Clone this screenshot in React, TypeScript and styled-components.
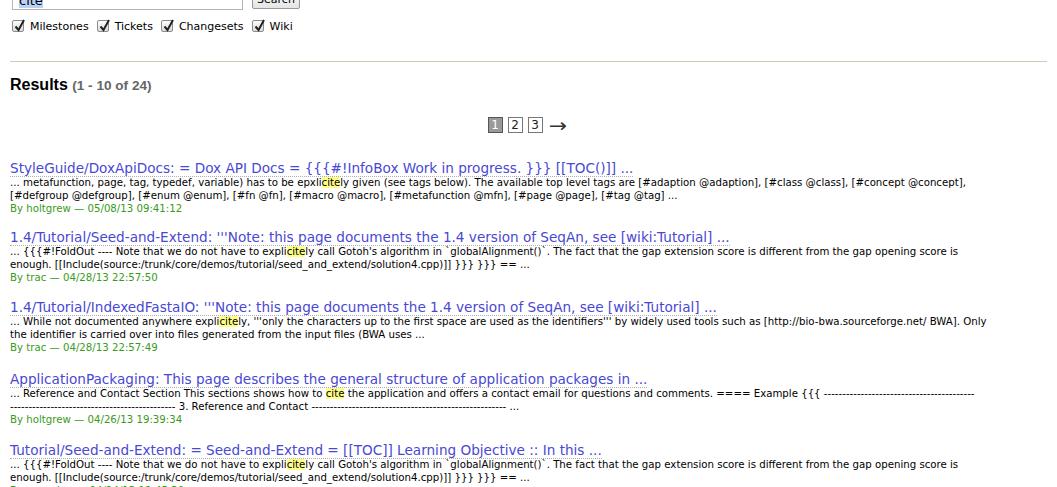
import React from "react";
import styled, { createGlobalStyle } from "styled-components";

const Global = createGlobalStyle`
  html, body { margin: 0; padding: 0; background: #fff; }
  body {
    font-family: "DejaVu Sans", Verdana, sans-serif;
    font-size: 11px;
    color: #000;
    overflow: hidden;
  }
`;

const Page = styled.div`
  padding: 0 10px;
`;

const SearchForm = styled.div`
  display: flex;
  align-items: flex-end;
  gap: 9px;
  margin-top: -12px;
  padding-left: 2px;
`;

const QueryField = styled.div`
  box-sizing: border-box;
  width: 231px;
  height: 22px;
  border: 1px solid #b5b5b5;
  border-top-color: #8a8a8a;
  background: #fff;
  display: flex;
  align-items: center;
  padding: 3px 0 0 6px;
  font-size: 13px;
`;

const Selected = styled.span`
  background: #b8d3f5;
  line-height: 15px;
`;

const SearchButton = styled.div`
  box-sizing: border-box;
  width: 48px;
  height: 20px;
  margin-bottom: 1px;
  border: 1px solid #9a9a9a;
  border-radius: 2px;
  background: linear-gradient(#ffffff, #e4e4e4);
  display: flex;
  align-items: center;
  justify-content: center;
  font-size: 11px;
`;

const Filters = styled.div`
  display: flex;
  align-items: center;
  gap: 8px;
  margin-top: 9px;
  padding-left: 2px;
  height: 14px;
`;

const Filter = styled.label`
  display: flex;
  align-items: center;
  gap: 6px;
  font-size: 11px;
`;

const Box = styled.span`
  position: relative;
  box-sizing: border-box;
  width: 12px;
  height: 12px;
  border: 1px solid #8c8c8c;
  border-radius: 2px;
  background: linear-gradient(#fdfdfd, #dcdcdc);
  display: inline-block;

  svg {
    position: absolute;
    left: 0px;
    top: -3px;
  }
`;

const Rule = styled.div`
  border-top: 1px solid #ccccbb;
  margin-top: 28px;
  height: 0;
`;

const Heading = styled.h2`
  font-family: "Liberation Sans", Arial, sans-serif;
  font-size: 16px;
  line-height: 18px;
  font-weight: bold;
  margin: 14px 0 0;
`;

const NumResults = styled.span`
  color: #666;
  font-size: 13.6px;
`;

const Paging = styled.div`
  display: flex;
  justify-content: center;
  align-items: center;
  gap: 5px;
  margin-top: 21px;
  padding-right: 4px;
  height: 17px;
`;

const PageBox = styled.span<{ $current?: boolean }>`
  box-sizing: border-box;
  width: 15px;
  height: 16px;
  border: 1px solid ${(p) => (p.$current ? "#555" : "#777")};
  background: ${(p) => (p.$current ? "#999" : "#fff")};
  color: ${(p) => (p.$current ? "#fff" : "#222")};
  display: flex;
  align-items: center;
  justify-content: center;
  font-size: 12px;
`;

const Arrow = styled.span`
  margin-left: 2px;
  font-size: 19px;
  line-height: 16px;
  color: #333;
  transform: scaleX(1.15);
`;

const Results = styled.dl`
  margin: 28px 0 0;
`;

const Item = styled.div<{ $gap: number }>`
  margin-bottom: ${(p) => p.$gap}px;
`;

const Title = styled.dt`
  font-size: 13.6px;
  line-height: 14px;
  height: 15px;
  a {
    color: #4848d4;
    text-decoration: none;
    border-bottom: 1px dotted #b0b0b0;
  }
`;

const Excerpt = styled.dd`
  margin: 0;
  font-size: 10.2px;
  line-height: 13px;
`;

const Line = styled.div`
  white-space: nowrap;
`;

const Hit = styled.span`
  background: #ffff88;
`;

const Meta = styled.dd`
  margin: 0;
  font-size: 10.2px;
  line-height: 13px;
  color: #3a9a20;
`;

const Check = () => (
  <Box>
    <svg width="13" height="14" viewBox="0 0 13 14">
      <path d="M2.5 8.5 L5.5 12 L11 2" fill="none" stroke="#222" strokeWidth="2" />
    </svg>
  </Box>
);

type Seg = string | { hit: string };
type Result = { title: string; lines: Seg[][]; author: string; date: string; gap: number };

const dashes = (n: number) => "-".repeat(n);

const fold1 = "... {{{#!FoldOut ---- Note that we do not have to expli";
const fold2 =
  "ly call Gotoh's algorithm in `globalAlignment()`. The fact that the gap extension score is different from the gap opening score is";
const foldEnd = "enough. [[Include(source:/trunk/core/demos/tutorial/seed_and_extend/solution4.cpp)]] }}} }}} == ...";

const results: Result[] = [
  {
    title: "StyleGuide/DoxApiDocs: = Dox API Docs = {{{#!InfoBox Work in progress. }}} [[TOC()]] ...",
    lines: [
      [
        "... metafunction, page, tag, typedef, variable) has to be epxli",
        { hit: "cite" },
        "ly given (see tags below). The available top level tags are [#adaption @adaption], [#class @class], [#concept @concept],",
      ],
      ["[#defgroup @defgroup], [#enum @enum], [#fn @fn], [#macro @macro], [#metafunction @mfn], [#page @page], [#tag @tag] ..."],
    ],
    author: "holtgrew",
    date: "05/08/13 09:41:12",
    gap: 15,
  },
  {
    title: "1.4/Tutorial/Seed-and-Extend: '''Note: this page documents the 1.4 version of SeqAn, see [wiki:Tutorial] ...",
    lines: [[fold1, { hit: "cite" }, fold2], [foldEnd]],
    author: "trac",
    date: "04/28/13 22:57:50",
    gap: 16,
  },
  {
    title: "1.4/Tutorial/IndexedFastaIO: '''Note: this page documents the 1.4 version of SeqAn, see [wiki:Tutorial] ...",
    lines: [
      [
        "... While not documented anywhere expli",
        { hit: "cite" },
        "ly, '''only the characters up to the first space are used as the identifiers''' by widely used tools such as [http://bio-bwa.sourceforge.net/ BWA]. Only",
      ],
      ["the identifier is carried over into files generated from the input files (BWA uses ..."],
    ],
    author: "trac",
    date: "04/28/13 22:57:49",
    gap: 18,
  },
  {
    title: "ApplicationPackaging: This page describes the general structure of application packages in ...",
    lines: [
      [
        "... Reference and Contact Section This sections shows how to ",
        { hit: "cite" },
        " the application and offers a contact email for questions and comments. ==== Example {{{ " + dashes(41),
      ],
      [dashes(45) + " 3. Reference and Contact " + dashes(53) + " ..."],
    ],
    author: "holtgrew",
    date: "04/26/13 19:39:34",
    gap: 17,
  },
  {
    title: "Tutorial/Seed-and-Extend: = Seed-and-Extend = [[TOC]] Learning Objective :: In this ...",
    lines: [[fold1, { hit: "cite" }, fold2], [foldEnd]],
    author: "rmaerker",
    date: "04/24/13 12:45:30",
    gap: 16,
  },
];

export default function App() {
  return (
    <>
      <Global />
      <Page>
        <SearchForm>
          <QueryField>
            <Selected>cite</Selected>
          </QueryField>
          <SearchButton>Search</SearchButton>
        </SearchForm>
        <Filters>
          {["Milestones", "Tickets", "Changesets", "Wiki"].map((f) => (
            <Filter key={f}>
              <Check />
              {f}
            </Filter>
          ))}
        </Filters>
        <Rule />
        <Heading>
          Results <NumResults>(1 - 10 of 24)</NumResults>
        </Heading>
        <Paging>
          <PageBox $current>1</PageBox>
          <PageBox>2</PageBox>
          <PageBox>3</PageBox>
          <Arrow>→</Arrow>
        </Paging>
        <Results>
          {results.map((r, i) => (
            <Item key={i} $gap={r.gap}>
              <Title>
                <a href="#">{r.title}</a>
              </Title>
              <Excerpt>
                {r.lines.map((line, j) => (
                  <Line key={j}>
                    {line.map((s, k) =>
                      typeof s === "string" ? <React.Fragment key={k}>{s}</React.Fragment> : <Hit key={k}>{s.hit}</Hit>
                    )}
                  </Line>
                ))}
              </Excerpt>
              <Meta>
                By {r.author} — {r.date}
              </Meta>
            </Item>
          ))}
        </Results>
      </Page>
    </>
  );
}
